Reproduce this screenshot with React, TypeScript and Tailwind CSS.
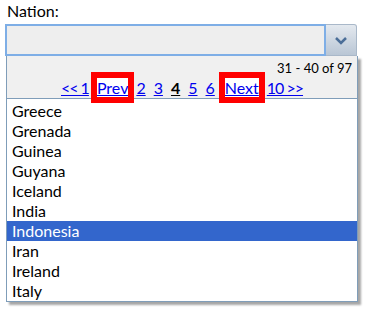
import React from "react";

const nations = [
  "Greece",
  "Grenada",
  "Guinea",
  "Guyana",
  "Iceland",
  "India",
  "Indonesia",
  "Iran",
  "Ireland",
  "Italy",
];

function App() {
  return (
    <div
      className="h-[310px] w-[369px] bg-white text-[16px] text-black"
      style={{ fontFamily: "Lato, 'Open Sans', sans-serif" }}
    >
      <div className="h-[24px] px-[7px] pt-[1px] leading-[20px]">Nation:</div>

      {/* Combo box */}
      <div className="ml-[5px] flex h-[32px] w-[352px]">
        <div className="flex-1 border-2 border-[#7eaee6] bg-[#eeeeee]" />
        <div className="flex w-[31px] items-center justify-center rounded-tr-[3px] border border-l-0 border-[#a9b8c9] bg-gradient-to-b from-[#e4e9ef] to-[#b9c6d5]">
          <svg width="14" height="9" viewBox="0 0 14 9">
            <path d="M2 2 L7 7 L12 2" fill="none" stroke="#4b6e98" strokeWidth="2.5" />
          </svg>
        </div>
      </div>

      {/* Dropdown */}
      <div className="ml-[6px] w-[352px] border border-t-0 border-[#7f9db9] bg-white shadow-[3px_3px_2px_rgba(0,0,0,0.35)]">
        <div className="h-[43px] border-b border-[#7f9db9] bg-[#f0f0f0]">
          <div className="h-[22px] pr-[5px] pt-[4px] text-right text-[13px] leading-[17px]">31 - 40 of 97</div>
          <div className="flex items-center justify-center gap-[8px] leading-[19px] text-[#0000ee]">
            <a className="tracking-[-1px] underline">&lt;&lt; 1</a>
            <a className="bg-white underline outline-[6px] outline-[#ff0000] outline-solid">Prev</a>
            <a className="underline">2</a>
            <a className="underline">3</a>
            <a className="font-bold text-black underline">4</a>
            <a className="underline">5</a>
            <a className="underline">6</a>
            <a className="ml-[2px] bg-white underline outline-[6px] outline-[#ff0000] outline-solid">Next</a>
            <a className="tracking-[-1px] underline">10 &gt;&gt;</a>
          </div>
        </div>
        <ul className="pt-[2px]">
          {nations.map((n) => (
            <li
              key={n}
              className={
                n === "Indonesia"
                  ? "h-[20px] bg-[#3366cc] pl-[5px] leading-[20px] text-white"
                  : "h-[20px] pl-[5px] leading-[20px]"
              }
            >
              {n}
            </li>
          ))}
        </ul>
      </div>
    </div>
  );
}

export default App;
